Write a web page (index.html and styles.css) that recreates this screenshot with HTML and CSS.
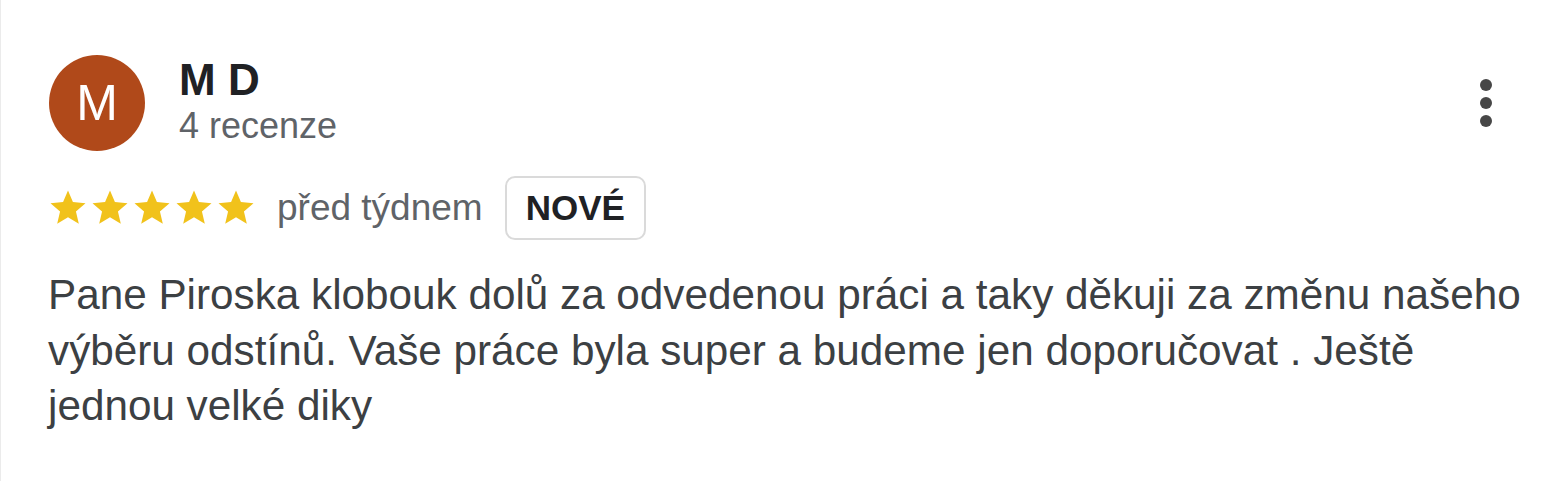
FILE: index.html
```html
<!DOCTYPE html>
<html lang="cs">
<head>
<meta charset="utf-8">
<title>Recenze</title>
<link rel="stylesheet" href="styles.css">
</head>
<body>
<div class="review">
  <div class="review-header">
    <div class="avatar">M</div>
    <div class="author">
      <div class="author-name">M D</div>
      <div class="author-meta">4 recenze</div>
    </div>
    <button class="menu-btn" aria-label="Další možnosti">
      <svg class="menu-icon" viewBox="0 0 24 24" width="72" height="72">
        <circle cx="12" cy="6" r="2"/>
        <circle cx="12" cy="12" r="2"/>
        <circle cx="12" cy="18" r="2"/>
      </svg>
    </button>
  </div>
  <div class="review-rating">
    <div class="stars">
      <svg class="star" viewBox="0 0 24 24"><path d="M12 17.27L18.18 21l-1.64-7.03L22 9.24l-7.19-.61L12 2 9.19 8.63 2 9.24l5.460 4.73L5.82 21z"/></svg>
      <svg class="star" viewBox="0 0 24 24"><path d="M12 17.27L18.18 21l-1.64-7.03L22 9.24l-7.19-.61L12 2 9.19 8.63 2 9.24l5.46 4.73L5.82 21z"/></svg>
      <svg class="star" viewBox="0 0 24 24"><path d="M12 17.27L18.18 21l-1.64-7.03L22 9.24l-7.19-.61L12 2 9.19 8.63 2 9.24l5.46 4.73L5.82 21z"/></svg>
      <svg class="star" viewBox="0 0 24 24"><path d="M12 17.27L18.18 21l-1.64-7.03L22 9.24l-7.19-.61L12 2 9.19 8.63 2 9.24l5.46 4.73L5.82 21z"/></svg>
      <svg class="star" viewBox="0 0 24 24"><path d="M12 17.27L18.18 21l-1.64-7.03L22 9.24l-7.19-.61L12 2 9.19 8.63 2 9.24l5.46 4.73L5.82 21z"/></svg>
    </div>
    <span class="review-date">před týdnem</span>
    <span class="badge">NOVÉ</span>
  </div>
  <p class="review-text">Pane Piroska klobouk dolů za odvedenou práci a taky děkuji za změnu našeho výběru odstínů. Vaše práce byla super a budeme jen doporučovat . Ještě jednou velké diky</p>
</div>
</body>
</html>
```

FILE: styles.css
```css
* { box-sizing: border-box; }

html, body {
  margin: 0;
  padding: 0;
  background: #ffffff;
}

body {
  font-family: "Liberation Sans", Arial, Helvetica, sans-serif;
}

.review {
  min-height: 100vh;
  border-left: 1px solid #ebebeb;
  padding: 55px 30px 0 47px;
}

.review-header {
  display: flex;
  align-items: flex-start;
}

.avatar {
  flex: none;
  width: 96px;
  height: 96px;
  border-radius: 50%;
  background: #b0491a;
  color: #ffffff;
  font-size: 50px;
  line-height: 96px;
  text-align: center;
  margin-left: 1px;
}

.author {
  margin-left: 34px;
  padding-top: 1px;
}

.author-name {
  font-size: 44px;
  font-weight: 700;
  line-height: 48px;
  color: #202124;
}

.author-meta {
  font-size: 36px;
  line-height: 44px;
  color: #5f6368;
}

.menu-btn {
  margin-left: auto;
  margin-right: 10px;
  margin-top: 12px;
  width: 72px;
  height: 72px;
  padding: 0;
  border: 0;
  background: transparent;
  display: flex;
  align-items: center;
  justify-content: center;
}

.menu-icon {
  fill: #474747;
  display: block;
}

.review-rating {
  display: flex;
  align-items: center;
  margin-top: 25px;
  height: 64px;
}

.stars {
  display: flex;
  margin-left: -1px;
}

.star {
  width: 42px;
  height: 42px;
  fill: #f1c21b;
  display: block;
}

.review-date {
  margin-left: 20px;
  font-size: 37px;
  color: #5f6368;
}

.badge {
  margin-left: 22px;
  height: 64px;
  padding: 0 19px;
  border: 2px solid #dadada;
  border-radius: 10px;
  font-size: 35px;
  font-weight: 700;
  color: #202124;
  display: flex;
  align-items: center;
}

.review-text {
  margin: 27px 0 0;
  font-size: 42.25px;
  line-height: 55.5px;
  color: #3c4043;
}
```
